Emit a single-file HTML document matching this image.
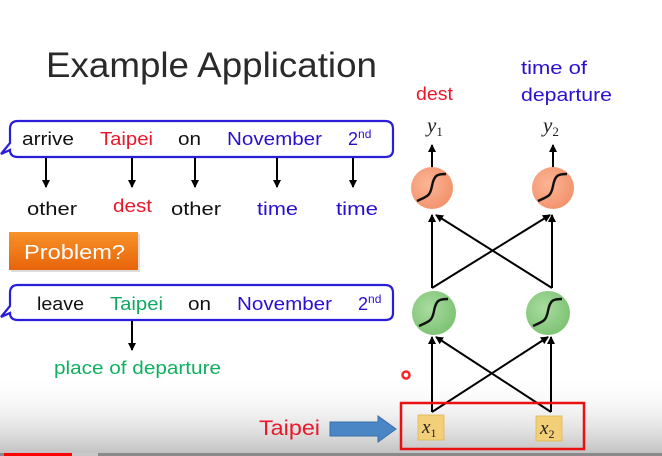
<!DOCTYPE html>
<html><head><meta charset="utf-8"><style>
html,body{margin:0;padding:0;background:#fff;}
svg{display:block;font-family:"Liberation Sans",sans-serif;}
</style></head><body>
<svg width="662" height="456" viewBox="0 0 662 456" xmlns="http://www.w3.org/2000/svg">
<defs>
<linearGradient id="bot" x1="0" y1="0" x2="0" y2="1">
<stop offset="0" stop-color="#fff" stop-opacity="0"/><stop offset="1" stop-color="#bebebe"/>
</linearGradient>
<linearGradient id="org" x1="0" y1="0" x2="0" y2="1">
<stop offset="0" stop-color="#f7922a"/><stop offset="1" stop-color="#e8640a"/>
</linearGradient>
<radialGradient id="oc" cx="0.4" cy="0.4" r="0.7"><stop offset="0" stop-color="#fbb595"/><stop offset="1" stop-color="#f28f68"/></radialGradient>
<radialGradient id="gc" cx="0.4" cy="0.4" r="0.7"><stop offset="0" stop-color="#a9dca0"/><stop offset="1" stop-color="#79c06f"/></radialGradient>
<marker id="ah" markerWidth="8" markerHeight="8" refX="7" refY="4" orient="auto" markerUnits="userSpaceOnUse"><path d="M0,0 L8,4 L0,8 z" fill="#000"/></marker>
</defs>
<rect x="0" y="375" width="662" height="81" fill="url(#bot)"/>
<text x="46" y="77" font-size="35" fill="#2a2a2a" textLength="331" lengthAdjust="spacingAndGlyphs">Example Application</text>

<path d="M18,121 H385 Q393,121 393,129 V150 Q393,157 385,157 H18 Q10,157 10,150 V150 L1,154 L10,143 V129 Q10,121 18,121 Z" fill="#fff" stroke="#2a1ed8" stroke-width="2.2"/>
<g font-size="18">
<text x="22" y="145" fill="#111" textLength="52" lengthAdjust="spacingAndGlyphs">arrive</text>
<text x="100" y="145" fill="#e8182a" textLength="53" lengthAdjust="spacingAndGlyphs">Taipei</text>
<text x="178" y="145" fill="#111" textLength="23" lengthAdjust="spacingAndGlyphs">on</text>
<text x="227" y="145" fill="#2a10d0" textLength="95" lengthAdjust="spacingAndGlyphs">November</text>
<text x="348" y="145" fill="#2a10d0">2<tspan font-size="12" dy="-7">nd</tspan></text>
</g>
<g stroke="#000" stroke-width="2" marker-end="url(#ah)">
<line x1="46" y1="158" x2="46" y2="187"/><line x1="132" y1="158" x2="132" y2="187"/><line x1="195" y1="158" x2="195" y2="187"/><line x1="277" y1="158" x2="277" y2="187"/><line x1="353" y1="158" x2="353" y2="187"/>
</g>
<g font-size="18">
<text x="27" y="215" fill="#111" textLength="50" lengthAdjust="spacingAndGlyphs">other</text>
<text x="113" y="212" fill="#e8182a" textLength="39" lengthAdjust="spacingAndGlyphs">dest</text>
<text x="171" y="215" fill="#111" textLength="50" lengthAdjust="spacingAndGlyphs">other</text>
<text x="257" y="215" fill="#2a10d0" textLength="41" lengthAdjust="spacingAndGlyphs">time</text>
<text x="336" y="215" fill="#2a10d0" textLength="42" lengthAdjust="spacingAndGlyphs">time</text>
</g>
<rect x="11" y="234" width="129" height="38" fill="#bbb" opacity="0.5"/>
<rect x="9" y="232" width="129" height="38" fill="url(#org)"/>
<text x="24" y="259" font-size="20" fill="#fff" textLength="101" lengthAdjust="spacingAndGlyphs">Problem?</text>

<path d="M18,285 H385 Q393,285 393,293 V313 Q393,320 385,320 H18 Q10,320 10,313 V313 L1,317 L10,306 V293 Q10,285 18,285 Z" fill="#fff" stroke="#2a1ed8" stroke-width="2.2"/>
<g font-size="18">
<text x="37" y="310" fill="#111" textLength="47" lengthAdjust="spacingAndGlyphs">leave</text>
<text x="110" y="310" fill="#10a860" textLength="53" lengthAdjust="spacingAndGlyphs">Taipei</text>
<text x="188" y="310" fill="#111" textLength="23" lengthAdjust="spacingAndGlyphs">on</text>
<text x="237" y="310" fill="#2a10d0" textLength="95" lengthAdjust="spacingAndGlyphs">November</text>
<text x="358" y="310" fill="#2a10d0">2<tspan font-size="12" dy="-7">nd</tspan></text>
</g>
<line x1="132" y1="321" x2="132" y2="350" stroke="#000" stroke-width="2" marker-end="url(#ah)"/>
<text x="54" y="374" font-size="18" fill="#10b060" textLength="167" lengthAdjust="spacingAndGlyphs">place of departure</text>

<text x="416" y="100" font-size="18" fill="#e8182a" textLength="37" lengthAdjust="spacingAndGlyphs">dest</text>
<text x="521" y="74" font-size="18" fill="#2a10d0" textLength="66" lengthAdjust="spacingAndGlyphs">time of</text>
<text x="521" y="101" font-size="18" fill="#2a10d0" textLength="91" lengthAdjust="spacingAndGlyphs">departure</text>
<text x="427" y="132" font-family="Liberation Serif,serif" font-style="italic" font-size="21" fill="#222">y<tspan font-style="normal" font-size="13" dy="4">1</tspan></text>
<text x="543" y="132" font-family="Liberation Serif,serif" font-style="italic" font-size="21" fill="#222">y<tspan font-style="normal" font-size="13" dy="4">2</tspan></text>
<g stroke="#000" stroke-width="2" marker-end="url(#ah)">
<line x1="432" y1="168" x2="432" y2="145"/><line x1="553" y1="168" x2="553" y2="145"/>
<line x1="432" y1="288" x2="432" y2="215"/><line x1="432" y1="288" x2="550" y2="215"/>
<line x1="552" y1="288" x2="552" y2="215"/><line x1="552" y1="288" x2="436" y2="215"/>
<line x1="432" y1="412" x2="432" y2="337"/><line x1="432" y1="412" x2="548" y2="337"/>
<line x1="551" y1="412" x2="551" y2="337"/><line x1="551" y1="412" x2="436" y2="337"/>
</g>
<circle cx="432" cy="188" r="21" fill="url(#oc)"/><circle cx="553" cy="188" r="21" fill="url(#oc)"/>
<circle cx="434" cy="313" r="22" fill="url(#gc)"/><circle cx="548" cy="313" r="22" fill="url(#gc)"/>
<g fill="none" stroke="#111" stroke-width="2.4">
<path d="M417,201 C428,196 430,196 432,186 C434,175 437,174 446,174"/>
<path d="M538,201 C549,196 551,196 553,186 C555,175 558,174 567,174"/>
<path d="M419,326 C430,321 432,321 434,311 C436,300 439,299 448,299"/>
<path d="M533,326 C544,321 546,321 548,311 C550,300 553,299 562,299"/>
</g>
<circle cx="406" cy="375" r="3.5" fill="none" stroke="#f22" stroke-width="2.5"/>
<rect x="401" y="403" width="183" height="46" fill="none" stroke="#e81010" stroke-width="2.5"/>
<rect x="418" y="415" width="26" height="25" fill="#f2cf78" stroke="#e0b850" stroke-width="0.8"/>
<rect x="536" y="416" width="26" height="25" fill="#f2cf78" stroke="#e0b850" stroke-width="0.8"/>
<text x="422" y="433" font-family="Liberation Serif,serif" font-style="italic" font-size="19" fill="#222">x<tspan font-style="normal" font-size="12" dy="4">1</tspan></text>
<text x="540" y="434" font-family="Liberation Serif,serif" font-style="italic" font-size="19" fill="#222">x<tspan font-style="normal" font-size="12" dy="4">2</tspan></text>
<text x="259" y="435" font-size="21" fill="#e8182a" textLength="61" lengthAdjust="spacingAndGlyphs">Taipei</text>
<path d="M330,422 H378 V416 L396,429 L378,442 V436 H330 Z" fill="#4a86c6" stroke="#3a70a8" stroke-width="1"/>

<rect x="0" y="453" width="662" height="3" fill="#8a8a8a"/>
<rect x="72" y="453" width="26" height="3" fill="#c8c8c8"/>
<rect x="4" y="453" width="68" height="3" fill="#f00"/>
</svg>
</body></html>
